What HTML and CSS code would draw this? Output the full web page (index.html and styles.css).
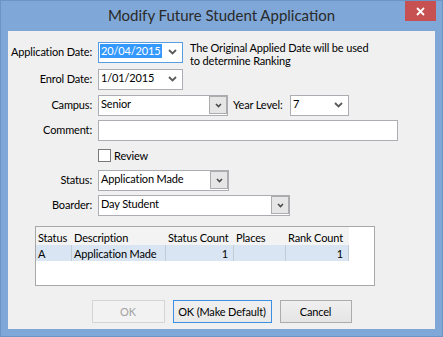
FILE: index.html
```html
<!DOCTYPE html>
<html lang="en">
<head>
<meta charset="utf-8">
<title>Modify Future Student Application</title>
<link rel="stylesheet" href="styles.css">
</head>
<body>
<div class="window">
  <div class="titlebar">
    <div class="title">Modify Future Student Application</div>
    <div class="close"><svg width="9" height="9" viewBox="0 0 9 9"><path d="M1 1L8 8M8 1L1 8" stroke="#fff" stroke-width="1.8" fill="none"/></svg></div>
  </div>
  <div class="client">
    <div class="row">
      <div class="lbl">Application Date:</div>
      <div class="combo focus w-date"><span class="sel">20/04/2015</span><span class="chev"><svg width="9" height="6" viewBox="0 0 9 6"><path d="M1 1L4.5 4.5L8 1" fill="none" stroke="#5a5a5a" stroke-width="1.8"/></svg></span></div>
      <div class="note">The Original Applied Date will be used<br>to determine Ranking</div>
    </div>
    <div class="row mt6">
      <div class="lbl">Enrol Date:</div>
      <div class="combo w-date"><span class="txt">1/01/2015</span><span class="chev"><svg width="9" height="6" viewBox="0 0 9 6"><path d="M1 1L4.5 4.5L8 1" fill="none" stroke="#5a5a5a" stroke-width="1.8"/></svg></span></div>
    </div>
    <div class="row mt5">
      <div class="lbl">Campus:</div>
      <div class="combo w-campus"><span class="txt">Senior</span><span class="ddbtn"><svg width="7" height="5" viewBox="0 0 7 5"><path d="M1 1L3.5 3.5L6 1" fill="none" stroke="#4a4a4a" stroke-width="1.6"/></svg></span></div>
      <div class="lbl-inline">Year Level:</div>
      <div class="combo w-year"><span class="txt">7</span><span class="chev"><svg width="9" height="6" viewBox="0 0 9 6"><path d="M1 1L4.5 4.5L8 1" fill="none" stroke="#5a5a5a" stroke-width="1.8"/></svg></span></div>
    </div>
    <div class="row mt4">
      <div class="lbl">Comment:</div>
      <div class="combo w-comment"></div>
    </div>
    <div class="row check-row">
      <span class="checkbox"></span><span class="check-lbl">Review</span>
    </div>
    <div class="row mt8">
      <div class="lbl">Status:</div>
      <div class="combo w-status"><span class="txt">Application Made</span><span class="ddbtn"><svg width="7" height="5" viewBox="0 0 7 5"><path d="M1 1L3.5 3.5L6 1" fill="none" stroke="#4a4a4a" stroke-width="1.6"/></svg></span></div>
    </div>
    <div class="row mt4">
      <div class="lbl">Boarder:</div>
      <div class="combo w-boarder"><span class="txt">Day Student</span><span class="ddbtn"><svg width="7" height="5" viewBox="0 0 7 5"><path d="M1 1L3.5 3.5L6 1" fill="none" stroke="#4a4a4a" stroke-width="1.6"/></svg></span></div>
    </div>
    <div class="grid">
      <div class="grid-row head">
        <div class="cell">Status</div>
        <div class="cell">Description</div>
        <div class="cell">Status Count</div>
        <div class="cell">Places</div>
        <div class="cell">Rank Count</div>
      </div>
      <div class="grid-row data">
        <div class="cell">A</div>
        <div class="cell">Application Made</div>
        <div class="cell num">1</div>
        <div class="cell"></div>
        <div class="cell num">1</div>
      </div>
    </div>
    <div class="buttons">
      <button class="btn btn-ok" disabled>OK</button>
      <button class="btn btn-default">OK (Make Default)</button>
      <button class="btn btn-cancel">Cancel</button>
    </div>
  </div>
</div>
</body>
</html>
```
FILE: styles.css
```css
* { box-sizing: border-box; }
html, body { margin: 0; padding: 0; }
body {
  width: 443px;
  height: 337px;
  overflow: hidden;
  font-family: Lato, "Liberation Sans", sans-serif;
  font-size: 11px;
  letter-spacing: -0.15px;
  color: #000;
}
.window {
  width: 443px;
  height: 337px;
  background: #7fa7d7;
  border: 1px solid #6e94c6;
  padding: 0 7px 7px 7px;
  display: flex;
  flex-direction: column;
}
.titlebar {
  height: 30px;
  display: grid;
  grid-template-columns: 1fr auto 1fr;
  align-items: start;
}
.title {
  grid-column: 2;
  font-size: 15px;
  line-height: 18px;
  letter-spacing: 0;
  margin-top: 5px;
  color: #2a2a2a;
  white-space: nowrap;
}
.close {
  grid-column: 3;
  justify-self: end;
  margin-right: -1px;
  width: 31px;
  height: 20px;
  background: #c75050;
  display: flex;
  align-items: center;
  justify-content: center;
}
.client {
  flex: 1;
  background: #f0f0f0;
  padding-top: 11px;
  display: flex;
  flex-direction: column;
}
.row {
  display: flex;
  align-items: flex-start;
  height: 21px;
}
.mt4 { margin-top: 4px; }
.mt5 { margin-top: 5px; }
.mt6 { margin-top: 6px; }
.mt8 { margin-top: 8px; }
.lbl {
  width: 84px;
  margin-right: 6px;
  text-align: right;
  line-height: 20px;
  white-space: nowrap;
}
.lbl-inline {
  width: 54px;
  margin-left: 5px;
  margin-right: 3px;
  line-height: 20px;
  white-space: nowrap;
}
.combo {
  height: 21px;
  border: 1px solid #abadb3;
  background: #fff;
  display: flex;
  align-items: flex-start;
  padding-left: 2px;
}
.combo.focus { border-color: #569de5; }
.txt, .sel {
  margin-top: 1px;
  line-height: 14px;
  white-space: nowrap;
}
.sel {
  background: #3399ff;
  color: #fff;
  padding: 0 1px;
  margin-left: -1px;
}
.chev {
  margin: 0 5px 0 auto;
  align-self: center;
  display: flex;
  padding-bottom: 1px;
}
.ddbtn {
  margin: 0 0 1px auto;
  align-self: stretch;
  width: 18px;
  background: #e6e6e6;
  border: 1px solid #acacac;
  display: flex;
  align-items: center;
  justify-content: center;
}
.w-date { width: 85px; }
.w-campus { width: 130px; }
.w-year { width: 59px; }
.w-comment { width: 300px; }
.w-status { width: 131px; }
.w-boarder { width: 192px; }
.note {
  margin-left: 7px;
  margin-top: -1px;
  line-height: 13px;
  white-space: nowrap;
}
.check-row {
  height: 13px;
  margin-top: 8px;
  padding-left: 90px;
  align-items: center;
}
.checkbox {
  width: 13px;
  height: 13px;
  border: 1px solid #7a7a7a;
  background: #fff;
}
.check-lbl {
  margin-left: 3px;
  line-height: 13px;
}
.grid {
  margin: 10px 0 0 27px;
  width: 340px;
  height: 60px;
  border: 1px solid #a8a8a8;
  background: #fff;
}
.grid-row {
  display: grid;
  grid-template-columns: 36px 94px 68px 52px 63px;
  width: 313px;
}
.grid-row.head {
  height: 18px;
  background: #f3f3f3;
}
.grid-row.head .cell {
  padding: 3px 0 0 2px;
  line-height: 15px;
  white-space: nowrap;
}
.grid-row.data {
  height: 16px;
  background: #d9e5f2;
}
.grid-row.data .cell {
  padding: 1px 0 0 2px;
  line-height: 15px;
  border-right: 1px solid #c3cbd5;
  white-space: nowrap;
}
.grid-row.data .cell.num {
  text-align: right;
  padding-right: 5px;
}
.buttons {
  margin-top: 14px;
  display: flex;
  justify-content: center;
  gap: 8px;
}
.btn {
  height: 23px;
  padding: 0;
  font-family: inherit;
  font-size: 11px;
  letter-spacing: -0.15px;
  color: #000;
  border: 1px solid #acacac;
  background: linear-gradient(#efefef, #e5e5e5);
  border-radius: 0;
}
.btn-ok {
  width: 73px;
  color: #a3a3a3;
  border-color: #d5d5d5;
  background: #f2f2f2;
}
.btn-default {
  width: 99px;
  border-color: #3d8fe3;
  background: linear-gradient(#f0f0f0, #e9e9e9);
}
.btn-cancel { width: 72px; }
```
